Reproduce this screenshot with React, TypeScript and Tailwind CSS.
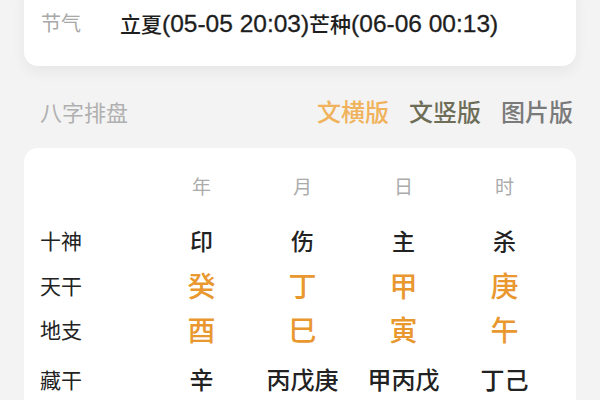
import React from "react";

const font = { fontFamily: '"Noto Sans CJK SC", "Noto Sans", sans-serif' };
const latin = { fontFamily: '"Liberation Sans", "Noto Sans CJK SC", sans-serif' };

const cols = ["年", "月", "日", "时"];
const shishen = ["印", "伤", "主", "杀"];
const tiangan = ["癸", "丁", "甲", "庚"];
const dizhi = ["酉", "巳", "寅", "午"];
const canggan = ["辛", "丙戊庚", "甲丙戊", "丁己"];

function Row({
  label,
  items,
  cls,
  h,
}: {
  label: string;
  items: string[];
  cls: string;
  h: string;
}) {
  return (
    <div className={`grid grid-cols-[111px_101px_101px_101px_101px] items-center ${h}`}>
      <div className="text-[21px] text-[#222] leading-none">{label}</div>
      {items.map((t, i) => (
        <div key={i} className={`text-center leading-none ${cls}`}>
          {t}
        </div>
      ))}
    </div>
  );
}

export default function App() {
  return (
    <div
      className="w-[600px] h-[400px] overflow-hidden bg-[#f3f3f3] px-6"
      style={font}
    >
      <div className="-mt-4 h-[82px] rounded-[14px] bg-white pt-6 pl-[17px] shadow-[0_6px_14px_rgba(0,0,0,0.05)]">
        <div className="flex h-[30px] items-center">
          <span className="w-[79px] text-[20px] text-[#a8a8a8] leading-none">节气</span>
          <span className="flex items-baseline pt-[2px] text-[21px] font-medium text-[#1e1e1e] leading-none">
            <span>立夏</span>
            <span className="text-[24.5px] [-webkit-text-stroke:0.3px_#1e1e1e]" style={latin}>(05-05 20:03)</span>
            <span>芒种</span>
            <span className="text-[24.5px] [-webkit-text-stroke:0.3px_#1e1e1e]" style={latin}>(06-06 00:13)</span>
          </span>
        </div>
      </div>

      <div className="mt-[30px] flex h-[30px] items-center justify-between pl-4 pr-[3px]">
        <span className="text-[22px] text-[#b0b0b0] leading-none">八字排盘</span>
        <div className="flex items-center gap-[20px] text-[24px] font-medium leading-none">
          <span className="text-[#f0b25a]">文横版</span>
          <span className="text-[#6e6e58]">文竖版</span>
          <span className="text-[#7a7a7a]">图片版</span>
        </div>
      </div>

      <div className="mt-[22px] h-[300px] rounded-[14px] bg-white pl-4 pt-[21px]">
        <Row label="" items={cols} cls="text-[19px] text-[#ababab]" h="h-[32px]" />
        <div className="h-[19px]" />
        <Row label="十神" items={shishen} cls="text-[23px] font-medium text-[#222]" h="h-[40px]" />
        <div className="h-[5px]" />
        <Row label="天干" items={tiangan} cls="text-[28px] font-medium text-[#e9972f]" h="h-[40px]" />
        <div className="h-[4px]" />
        <Row label="地支" items={dizhi} cls="text-[28px] font-medium text-[#e9972f]" h="h-[40px]" />
        <div className="h-[10px]" />
        <Row label="藏干" items={canggan} cls="text-[24px] font-medium text-[#222]" h="h-[40px]" />
      </div>
    </div>
  );
}
